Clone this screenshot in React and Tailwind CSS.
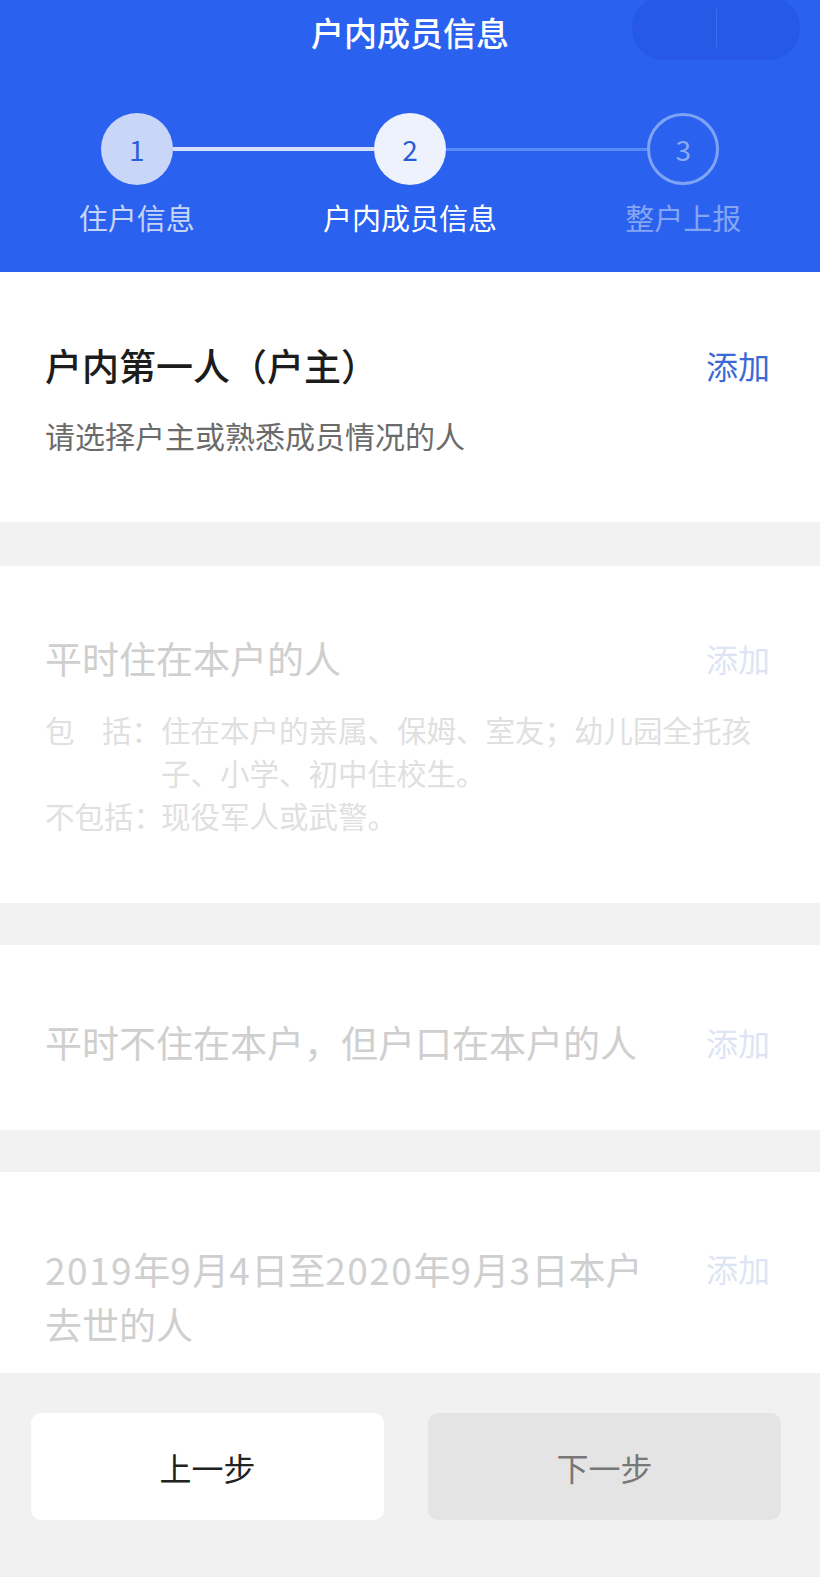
import React from "react";

const font = { fontFamily: '"Noto Sans CJK SC", "Noto Sans", sans-serif' };

const Step = ({ n, label, state, left, right }) => {
  const circle =
    state === "done"
      ? "bg-[#c9d6f7] text-[#2d5fd8]"
      : state === "active"
      ? "bg-[#eef2fd] text-[#2a5bd7]"
      : "border-[3px] border-[#7fa4f6] text-[#8aaaf5]";
  const text =
    state === "done"
      ? "text-[#c6d4f8]"
      : state === "active"
      ? "text-white"
      : "text-[#86a5f3]";
  return (
    <div className="flex flex-col items-center">
      <div className="flex items-center w-full">
        <div className={`flex-1 ${left || ""}`} />
        <div
          className={`w-[72px] h-[72px] rounded-full flex items-center justify-center text-[28px] ${circle}`}
        >
          {n}
        </div>
        <div className={`flex-1 ${right || ""}`} />
      </div>
      <div className={`mt-[12px] text-[29px] leading-[40px] ${text}`}>{label}</div>
    </div>
  );
};

const Add = ({ faded }) => (
  <div
    className={`text-[32px] leading-[48px] shrink-0 ${
      faded ? "text-[#dde5f5]" : "text-[#3b6ad6]"
    }`}
  >
    添加
  </div>
);

const Num = ({ children }) => <span className="tracking-[1.5px]">{children}</span>;

const App = () => {
  return (
    <div className="w-[820px] h-[1577px] bg-[#f2f2f2] flex flex-col" style={font}>
      {/* header start */}
      <div className="bg-[#2a62ef] h-[272px] shrink-0">
        <div className="relative h-[64px] flex items-center justify-center">
          <div className="text-white text-[33px] font-medium leading-[44px]">
            户内成员信息
          </div>
          <div className="absolute right-[20px] top-[-4px] w-[168px] h-[64px] rounded-full bg-[#2659e6] flex items-center">
            <div className="flex-1" />
            <div className="w-px h-[38px] bg-[#3a6cf0]" />
            <div className="flex-1" />
          </div>
        </div>
        {/* steps */}
        <div className="grid grid-cols-3 mt-[49px]">
          <Step n="1" label="住户信息" state="done" right="h-[4px] bg-[#d5e0fb]" />
          <Step
            n="2"
            label="户内成员信息"
            state="active"
            left="h-[4px] bg-[#d5e0fb]"
            right="h-[3px] bg-[#5a8bf5]"
          />
          <Step n="3" label="整户上报" state="todo" left="h-[3px] bg-[#5a8bf5]" />
        </div>
      </div>
      {/* header end */}

      {/* card 1 */}
      <div className="bg-white h-[250px] shrink-0 pl-[45px] pr-[50px] pt-[69px]">
        <div className="flex justify-between items-start">
          <div className="text-[37px] leading-[48px] font-medium text-[#1c1c1c]">
            户内第一人（户主）
          </div>
          <Add />
        </div>
        <div className="mt-[25px] text-[30px] leading-[43px] text-[#6b6b6b]">
          请选择户主或熟悉成员情况的人
        </div>
      </div>

      <div className="h-[44px] shrink-0" />

      {/* card 2 */}
      <div className="bg-white h-[337px] shrink-0 pl-[45px] pr-[50px] pt-[68px]">
        <div className="flex justify-between items-start">
          <div className="text-[37px] leading-[48px] text-[#cfcfcf]">平时住在本户的人</div>
          <Add faded />
        </div>
        <div className="mt-[26px] text-[29.5px] leading-[43px] text-[#e0e0e0]">
          <div className="flex">
            <div className="w-[116px] shrink-0 flex justify-between whitespace-nowrap">
              <span>包</span>
              <span>括：</span>
            </div>
            <div className="w-[610px]">
              住在本户的亲属、保姆、室友；幼儿园全托孩子、小学、初中住校生。
            </div>
          </div>
          <div className="flex">
            <div className="w-[116px] shrink-0 whitespace-nowrap">不包括：</div>
            <div>现役军人或武警。</div>
          </div>
        </div>
      </div>

      <div className="h-[42px] shrink-0" />

      {/* card 3 */}
      <div className="bg-white h-[185px] shrink-0 pl-[45px] pr-[50px] pt-[73px]">
        <div className="flex justify-between items-start">
          <div className="text-[37px] leading-[48px] text-[#cfcfcf]">
            平时不住在本户，但户口在本户的人
          </div>
          <Add faded />
        </div>
      </div>

      <div className="h-[42px] shrink-0" />

      {/* card 4 */}
      <div className="bg-white h-[201px] shrink-0 pl-[45px] pr-[50px] pt-[70px]">
        <div className="flex justify-between items-start">
          <div className="text-[37px] leading-[55px] text-[#cfcfcf]">
            <Num>2019</Num>年<Num>9</Num>月<Num>4</Num>日至<Num>2020</Num>年<Num>9</Num>月
            <Num>3</Num>日本户
            <br />
            去世的人
          </div>
          <div className="pt-[2px]">
            <Add faded />
          </div>
        </div>
      </div>

      {/* bottom bar */}
      <div className="flex-1 bg-[#f1f1f1] pt-[40px] pl-[31px] pr-[39px]">
        <div className="flex gap-[44px]">
          <div className="flex-1 h-[107px] rounded-[10px] bg-white flex items-center justify-center text-[32px] text-[#222]">
            上一步
          </div>
          <div className="flex-1 h-[107px] rounded-[10px] bg-[#e4e4e4] flex items-center justify-center text-[32px] text-[#777]">
            下一步
          </div>
        </div>
      </div>
    </div>
  );
};

export default App;
